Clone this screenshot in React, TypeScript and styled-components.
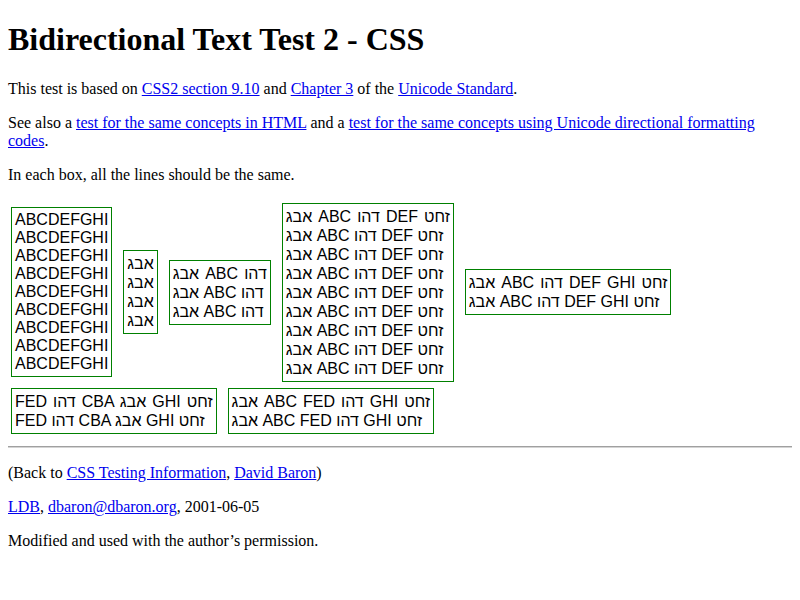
import React from "react";
import styled, { createGlobalStyle } from "styled-components";

const Global = createGlobalStyle`
  html, body {
    margin: 0;
    padding: 0;
  }
  body {
    padding: 0 8px 8px 8px;
    background: #ffffff;
    color: #000000;
    font-family: "Liberation Serif", "Times New Roman", serif;
    font-size: 16px;
  }
`;

const Title = styled.h1`
  font-size: 32px;
  font-weight: bold;
  margin: 21.44px 0;
`;

const Para = styled.p`
  margin: 16px 0;
`;

const Link = styled.a`
  color: #0000ee;
  text-decoration: underline;
`;

const BoxArea = styled.div`
  display: flex;
  flex-wrap: wrap;
  align-items: center;
  column-gap: 11px;
  row-gap: 6.6px;
  padding: 3px 0 4px 3px;
`;

const Box = styled.div<{ $lh: number }>`
  border: 1px solid #008000;
  padding: 3px 3px 3px 3px;
  font-family: "Liberation Sans", Arial, sans-serif;
  font-size: 16px;
  line-height: ${(p) => p.$lh}px;
  white-space: nowrap;
  direction: ltr;
`;

const Line = styled.div<{ $spaced?: boolean }>`
  display: block;
  word-spacing: ${(p) => (p.$spaced ? "1.6px" : "0")};
`;

const Rule = styled.hr`
  margin: 8px 0;
  border: none;
  border-top: 1px solid #a0a0a0;
  border-bottom: 1px solid #d4d4d4;
  height: 0;
`;

type BoxSpec = { text: string; count: number; lh: number; spacedFirst: boolean };

const boxes: BoxSpec[] = [
  { text: "ABCDEFGHI", count: 9, lh: 18, spacedFirst: false },
  { text: "אבג", count: 4, lh: 19, spacedFirst: false },
  { text: "אבג ABC דהו", count: 3, lh: 19, spacedFirst: true },
  { text: "אבג ABC דהו DEF זחט", count: 9, lh: 19, spacedFirst: true },
  { text: "אבג ABC דהו DEF GHI זחט", count: 2, lh: 19, spacedFirst: true },
  { text: "FED דהו CBA אבג GHI זחט", count: 2, lh: 19, spacedFirst: true },
  { text: "אבג ABC FED דהו GHI זחט", count: 2, lh: 19, spacedFirst: true },
];

export default function App() {
  return (
    <>
      <Global />
      <Title>Bidirectional Text Test 2 - CSS</Title>
      <Para>
        This test is based on <Link href="#">CSS2 section 9.10</Link> and{" "}
        <Link href="#">Chapter 3</Link> of the <Link href="#">Unicode Standard</Link>.
      </Para>
      <Para>
        See also a <Link href="#">test for the same concepts in HTML</Link> and a{" "}
        <Link href="#">test for the same concepts using Unicode directional formatting codes</Link>.
      </Para>
      <Para>In each box, all the lines should be the same.</Para>
      <BoxArea>
        {boxes.map((b, i) => (
          <Box key={i} $lh={b.lh}>
            {Array.from({ length: b.count }).map((_, j) => (
              <Line key={j} $spaced={b.spacedFirst && j === 0}>
                {b.text}
              </Line>
            ))}
          </Box>
        ))}
      </BoxArea>
      <Rule />
      <Para>
        (Back to <Link href="#">CSS Testing Information</Link>, <Link href="#">David Baron</Link>)
      </Para>
      <Para>
        <Link href="#">LDB</Link>, <Link href="#">dbaron@dbaron.org</Link>, 2001-06-05
      </Para>
      <Para>Modified and used with the author’s permission.</Para>
    </>
  );
}
